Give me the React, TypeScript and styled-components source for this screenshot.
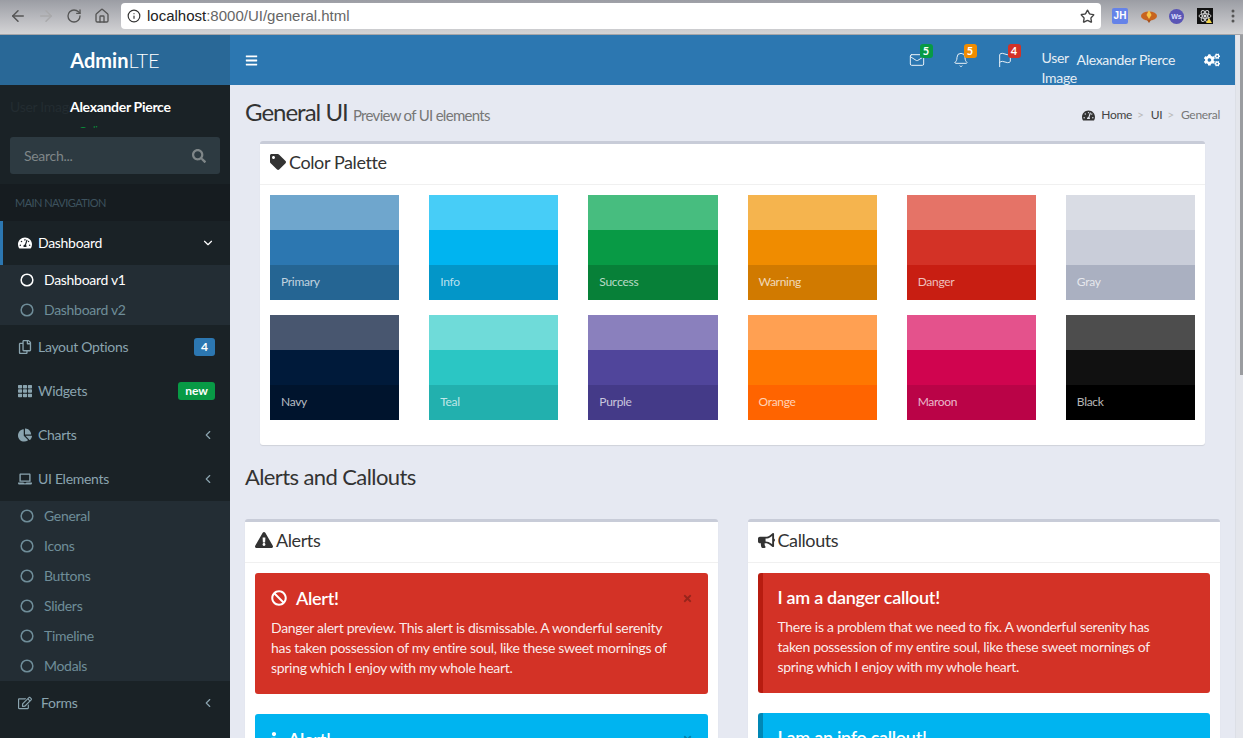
import React from "react";
import styled, { createGlobalStyle } from "styled-components";
import { ArrowLeft, ArrowRight, RotateCw, Home, Star, Info, ChevronDown, ChevronLeft, Circle, Mail, Bell, Flag } from "lucide-react";
import {
  FaTachometerAlt, FaTag, FaExclamationTriangle, FaBullhorn, FaBan, FaCogs, FaTh, FaChartPie,
  FaLaptop, FaRegEdit, FaRegCopy, FaBars, FaSearch, FaInfo, FaTimes,
} from "react-icons/fa";

const font = `"Lato", "Noto Sans", sans-serif`;

const Global = createGlobalStyle`
  html, body { margin: 0; padding: 0; height: 100%; overflow: hidden; }
  body { font-family: ${font}; font-size: 14px; line-height: 20px; letter-spacing: -0.3px; color: #333; background: #e6e9f2; }
  * { box-sizing: border-box; }
`;

const Page = styled.div`
  width: 1243px; height: 738px; display: flex; flex-direction: column; overflow: hidden;
`;
const Chrome = styled.div`
  flex: 0 0 35px; display: flex; align-items: flex-start; padding-top: 3px;
  background: linear-gradient(#9b9da4, #d4d4d6); border-bottom: 1px solid #a5a5a8;
`;
const NavButtons = styled.div`
  flex: 0 0 121px; height: 26px; display: flex; align-items: center; padding-left: 8px; gap: 8px;
`;
const ChromeBtn = styled.span<{ $off?: boolean }>`
  width: 20px; height: 20px; display: flex; align-items: center; justify-content: center;
  color: ${(p) => (p.$off ? "#a9a9ab" : "#555")};
`;
const AddressBar = styled.div`
  flex: 0 0 980px; height: 26px; background: #fff; border-radius: 4px; display: flex; align-items: center;
  padding: 0 6px; color: #333; font-family: "Liberation Sans", sans-serif; font-size: 15px; letter-spacing: 0;
`;
const AddressHost = styled.span` color: #222; margin-left: 6px; `;
const AddressRest = styled.span` color: #666; flex: 1; `;
const Extensions = styled.div`
  flex: 1; height: 26px; display: flex; align-items: center; padding-left: 11px; gap: 12.5px; letter-spacing: 0;
`;
const ExtJH = styled.span`
  width: 16px; height: 16px; border-radius: 2px; background: #6583e8; color: #fff; font: bold 10px/16px "Liberation Sans", sans-serif;
  text-align: center;
`;
const ExtWs = styled.span`
  width: 15px; height: 15px; border-radius: 50%; background: #5a55b5; color: #dfe0ff; font: bold 7px/15px "Liberation Sans", sans-serif;
  text-align: center;
`;
const MenuDots = styled.svg` margin-left: 6px; `;
const Body = styled.div` flex: 1; display: flex; min-height: 0; `;

const Sidebar = styled.aside` flex: 0 0 230px; background: #1a2226; display: flex; flex-direction: column; `;
const Logo = styled.div`
  flex: 0 0 50px; background: #296897; color: #fff; font-size: 20px; line-height: 50px; text-align: center; letter-spacing: 0;
  b { font-weight: 700; } span { font-weight: 300; }
`;
const UserPanel = styled.div`
  height: 43px; overflow: hidden; display: flex; padding: 12px 0 0 10px;
`;
const GhostAlt = styled.span` flex: 0 0 60px; color: #232c31; white-space: nowrap; overflow: hidden; `;
const UserInfo = styled.div` color: #fff; font-weight: 700; font-size: 14px; line-height: 20px; `;
const Online = styled.div` color: #0a8a3a; font-size: 11px; font-weight: 400; margin-top: 4px; `;
const SearchWrap = styled.div` padding: 9px 10px 10px; `;
const SearchBox = styled.div`
  height: 37px; background: #2d3a41; border-radius: 3px; display: flex; align-items: center; justify-content: space-between;
  padding: 0 14px; color: #7f8688; font-size: 14px;
`;
const MenuHeader = styled.div`
  height: 37px; background: #161c20; color: #3d525e; font-size: 11px; letter-spacing: -0.55px; line-height: 37px; padding-left: 15px;
`;
const MenuRow = styled.div<{ $active?: boolean }>`
  height: 44px; display: flex; align-items: center; padding: 0 15px; gap: 6px;
  border-left: 3px solid ${(p) => (p.$active ? "#2c77b1" : "transparent")};
  color: ${(p) => (p.$active ? "#fff" : "#8aa4af")}; font-size: 14px;
`;
const IconSlot = styled.span<{ $w?: number }>`
  flex: 0 0 ${(p) => p.$w ?? 14}px; display: flex; align-items: center; font-size: 14px;
`;
const MenuLabel = styled.span` flex: 1; `;
const Badge = styled.span<{ $bg: string }>`
  background: ${(p) => p.$bg}; color: #fff; font-size: 12px; font-weight: 700; line-height: 18px; height: 18px;
  padding: 0 7px; border-radius: 3px; letter-spacing: 0;
`;
const Submenu = styled.div` background: #232d34; `;
const SubRow = styled.div<{ $active?: boolean }>`
  height: 30px; display: flex; align-items: center; padding-left: 20px; gap: 10px; font-size: 14px;
  color: ${(p) => (p.$active ? "#fff" : "#6f8d99")};
`;

const Main = styled.div` flex: 0 0 1005px; display: flex; flex-direction: column; min-height: 0; `;
const TopBar = styled.header`
  flex: 0 0 50px; height: 50px; min-height: 0; background: #2c77b1; color: #fff; display: flex; align-items: center; padding: 0 15px;
`;
const Spacer = styled.div` flex: 1; `;
const NavIcon = styled.span<{ $mr: number }>`
  position: relative; display: flex; margin-right: ${(p) => p.$mr}px; color: #e8f0f6;
`;
const NavBadge = styled.span<{ $bg: string }>`
  position: absolute; top: -8px; right: -8px; width: 13px; height: 14px; border-radius: 3px; background: ${(p) => p.$bg};
  color: #fff; font-size: 11px; font-weight: 700; line-height: 14px; text-align: center; letter-spacing: 0;
`;
const UserAlt = styled.span`
  width: 34px; line-height: 20px; font-size: 14px; align-self: flex-start; margin-top: 13px; color: #e4edf4; white-space: normal;
`;
const UserName = styled.span` font-size: 14px; color: #e8f0f6; margin: 0 29px 0 1px; white-space: nowrap; `;

const Content = styled.main` flex: 1; overflow: hidden; min-height: 0; `;
const ContentHead = styled.div`
  display: flex; align-items: center; justify-content: space-between; padding: 15px 15px 0; height: 41px;
`;
const PageTitle = styled.h1`
  margin: 0; font-size: 24px; font-weight: 400; line-height: 26px; color: #333; letter-spacing: -1px;
  small { font-size: 15px; color: #777; letter-spacing: -0.7px; }
`;
const Crumbs = styled.div`
  display: flex; align-items: center; margin-top: 4px; font-size: 12px; color: #444;
  svg { margin-right: 6px; color: #333; font-size: 13px; }
  em { font-style: normal; color: #777; }
`;
const CrumbSep = styled.i` color: #bbb; font-style: normal; padding: 0 7px 0 5px; `;
const Section = styled.section` padding: 15px; `;
const Box = styled.div<{ $inset?: boolean }>`
  background: #fff; border-top: 3px solid #c8ccd8; border-radius: 3px; box-shadow: 0 1px 1px rgba(0,0,0,.1);
  margin: ${(p) => (p.$inset ? "0 15px" : "0")};
`;
const BoxHead = styled.div`
  height: 41px; padding: 8px 10px 12px; border-bottom: 1px solid #f0f0f0; display: flex; align-items: center; gap: 3px;
  font-size: 18px; line-height: 20px; color: #333; letter-spacing: -0.4px;
`;
const BoxBody = styled.div` padding: 10px; `;
const Palette = styled.div` display: grid; grid-template-columns: repeat(6, 1fr); column-gap: 30px; row-gap: 15px; padding-bottom: 15px; `;
const Swatch = styled.div` display: flex; flex-direction: column; `;
const Band = styled.div<{ $c: string }>`
  height: 35px; background: ${(p) => p.$c}; color: rgba(255,255,255,.72); font-size: 12px; line-height: 34px; padding-left: 11px;
`;
const SectionTitle = styled.h2`
  margin: 19px 0 29px; font-size: 22px; font-weight: 400; line-height: 26px; color: #333; letter-spacing: -0.6px;
`;
const Columns = styled.div` display: grid; grid-template-columns: 1fr 1fr; column-gap: 30px; `;
const Alert = styled.div<{ $bg: string }>`
  position: relative; background: ${(p) => p.$bg}; color: rgba(255,255,255,.92); border-radius: 3px; padding: 15px 16px 16px; margin-bottom: 20px;
  font-size: 14px; line-height: 20px; white-space: nowrap;
`;
const AlertTitle = styled.div`
  display: flex; align-items: center; gap: 9px; color: #fff; font-size: 18px; font-weight: 600; line-height: 20px; margin-bottom: 10px;
`;
const InfoGlyph = styled(FaInfo)` width: 6px; height: 15px; margin-right: 2px; `;
const Close = styled.span`
  position: absolute; top: 20px; right: 15px; color: rgba(0,0,0,.28); font-size: 11px; display: flex;
`;
const Callout = styled.div<{ $bg: string; $edge: string }>`
  background: ${(p) => p.$bg}; border-left: 5px solid ${(p) => p.$edge}; border-radius: 3px; color: rgba(255,255,255,.92);
  padding: 14px 15px 16px; margin-bottom: 20px; font-size: 14px; line-height: 20px; white-space: nowrap;
`;
const CalloutTitle = styled.div` color: #fff; font-size: 18px; font-weight: 600; line-height: 20px; margin-bottom: 10px; `;

const Scrollbar = styled.div`
  flex: 0 0 8px; background: #e4e6ec; padding-left: 4px; border-left: 1px solid #dcdfe6;
`;
const Thumb = styled.div` height: 340px; background: #9a9ca0; `;

const swatches: [string, string, string, string][] = [
  ["Primary", "#6fa6cd", "#2c77b1", "#256593"],
  ["Info", "#47cdf7", "#00b4f0", "#0396c8"],
  ["Success", "#47bd7f", "#089a45", "#078038"],
  ["Warning", "#f5b44e", "#f08c00", "#d17a00"],
  ["Danger", "#e57367", "#d33226", "#c81e12"],
  ["Gray", "#d9dce4", "#c9cdd9", "#aab0c1"],
  ["Navy", "#48566f", "#001a3a", "#00142d"],
  ["Teal", "#6fdbd9", "#2bc6c4", "#22b0ae"],
  ["Purple", "#8a80bd", "#50459b", "#443a88"],
  ["Orange", "#ffa052", "#ff7701", "#ff6400"],
  ["Maroon", "#e4528c", "#d0044f", "#ba0347"],
  ["Black", "#4d4d4d", "#111111", "#000000"],
];

const Sub = ({ label, active }: { label: string; active?: boolean }) => (
  <SubRow $active={active}><Circle size={14} strokeWidth={2.6} /><span>{label}</span></SubRow>
);

export default function App() {
  return (
    <Page>
      <Global />
      <Chrome>
        <NavButtons>
          <ChromeBtn><ArrowLeft size={18} /></ChromeBtn>
          <ChromeBtn $off><ArrowRight size={18} /></ChromeBtn>
          <ChromeBtn><RotateCw size={16} /></ChromeBtn>
          <ChromeBtn><Home size={16} /></ChromeBtn>
        </NavButtons>
        <AddressBar>
          <Info size={14} />
          <AddressHost>localhost</AddressHost><AddressRest>:8000/UI/general.html</AddressRest>
          <Star size={15} color="#444" strokeWidth={2.2} />
        </AddressBar>
        <Extensions>
          <ExtJH>JH</ExtJH>
          <svg width="16" height="14" viewBox="0 0 16 14"><ellipse cx="8" cy="7" rx="8" ry="4.5" fill="#c8641e" /><path d="M8 1l2.5 5-2.5 4-2.5-4z" fill="#f7c548" /><path d="M6 11h4l-2 3z" fill="#a8501a" /></svg>
          <ExtWs>Ws</ExtWs>
          <svg width="16" height="16" viewBox="0 0 16 16"><rect width="16" height="16" fill="#111" /><circle cx="8" cy="8" r="1.5" fill="#ddd" /><ellipse cx="8" cy="8" rx="6" ry="2.4" fill="none" stroke="#ccc" /><ellipse cx="8" cy="8" rx="6" ry="2.4" fill="none" stroke="#ccc" transform="rotate(60 8 8)" /><ellipse cx="8" cy="8" rx="6" ry="2.4" fill="none" stroke="#ccc" transform="rotate(120 8 8)" /><path d="M12 10l3 5H9z" fill="#f2d64b" /></svg>
          <MenuDots width="4" height="14" viewBox="0 0 4 14"><circle cx="2" cy="2" r="1.5" fill="#555" /><circle cx="2" cy="7" r="1.5" fill="#555" /><circle cx="2" cy="12" r="1.5" fill="#555" /></MenuDots>
        </Extensions>
      </Chrome>
      <Body>
        <Sidebar>
          <Logo><b>Admin</b><span>LTE</span></Logo>
          <UserPanel>
            <GhostAlt>User Image</GhostAlt>
            <UserInfo>Alexander Pierce<Online>● Online</Online></UserInfo>
          </UserPanel>
          <SearchWrap>
            <SearchBox><span>Search...</span><FaSearch size={14} /></SearchBox>
          </SearchWrap>
          <MenuHeader>MAIN NAVIGATION</MenuHeader>
          <MenuRow $active><IconSlot><FaTachometerAlt /></IconSlot><MenuLabel>Dashboard</MenuLabel><ChevronDown size={14} /></MenuRow>
          <Submenu>
            <Sub label="Dashboard v1" active />
            <Sub label="Dashboard v2" />
          </Submenu>
          <MenuRow><IconSlot><FaRegCopy /></IconSlot><MenuLabel>Layout Options</MenuLabel><Badge $bg="#2c77b1">4</Badge></MenuRow>
          <MenuRow><IconSlot><FaTh /></IconSlot><MenuLabel>Widgets</MenuLabel><Badge $bg="#089a45">new</Badge></MenuRow>
          <MenuRow><IconSlot><FaChartPie /></IconSlot><MenuLabel>Charts</MenuLabel><ChevronLeft size={14} /></MenuRow>
          <MenuRow><IconSlot><FaLaptop /></IconSlot><MenuLabel>UI Elements</MenuLabel><ChevronLeft size={14} /></MenuRow>
          <Submenu>
            {["General", "Icons", "Buttons", "Sliders", "Timeline", "Modals"].map((l) => <Sub key={l} label={l} />)}
          </Submenu>
          <MenuRow><IconSlot $w={17}><FaRegEdit /></IconSlot><MenuLabel>Forms</MenuLabel><ChevronLeft size={14} /></MenuRow>
        </Sidebar>
        <Main>
          <TopBar>
            <FaBars size={13} />
            <Spacer />
            <NavIcon $mr={28}><Mail size={16} strokeWidth={1.5} /><NavBadge $bg="#089a45">5</NavBadge></NavIcon>
            <NavIcon $mr={28}><Bell size={16} strokeWidth={1.5} /><NavBadge $bg="#f08c00">5</NavBadge></NavIcon>
            <NavIcon $mr={29}><Flag size={16} strokeWidth={1.5} /><NavBadge $bg="#d33226">4</NavBadge></NavIcon>
            <UserAlt>User Image</UserAlt>
            <UserName>Alexander Pierce</UserName>
            <FaCogs size={16} />
          </TopBar>
          <Content>
            <ContentHead>
              <PageTitle>General UI <small>Preview of UI elements</small></PageTitle>
              <Crumbs><FaTachometerAlt /><span>Home</span><CrumbSep>&gt;</CrumbSep><span>UI</span><CrumbSep>&gt;</CrumbSep><em>General</em></Crumbs>
            </ContentHead>
            <Section>
              <Box $inset>
                <BoxHead><FaTag size={16} />Color Palette</BoxHead>
                <BoxBody>
                  <Palette>
                    {swatches.map(([n, a, b, c]) => (
                      <Swatch key={n}><Band $c={a} /><Band $c={b} /><Band $c={c}>{n}</Band></Swatch>
                    ))}
                  </Palette>
                </BoxBody>
              </Box>
              <SectionTitle>Alerts and Callouts</SectionTitle>
              <Columns>
                <Box>
                  <BoxHead><FaExclamationTriangle size={18} />Alerts</BoxHead>
                  <BoxBody>
                    <Alert $bg="#d33226">
                      <Close><FaTimes /></Close>
                      <AlertTitle><FaBan size={16} />Alert!</AlertTitle>
                      Danger alert preview. This alert is dismissable. A wonderful serenity<br />
                      has taken possession of my entire soul, like these sweet mornings of<br />
                      spring which I enjoy with my whole heart.
                    </Alert>
                    <Alert $bg="#00b4f0">
                      <Close><FaTimes /></Close>
                      <AlertTitle><InfoGlyph />Alert!</AlertTitle>
                      Info alert preview. This alert is dismissable.
                    </Alert>
                  </BoxBody>
                </Box>
                <Box>
                  <BoxHead><FaBullhorn size={17} />Callouts</BoxHead>
                  <BoxBody>
                    <Callout $bg="#d33226" $edge="#b71c10">
                      <CalloutTitle>I am a danger callout!</CalloutTitle>
                      There is a problem that we need to fix. A wonderful serenity has<br />
                      taken possession of my entire soul, like these sweet mornings of<br />
                      spring which I enjoy with my whole heart.
                    </Callout>
                    <Callout $bg="#00b4f0" $edge="#0087b5">
                      <CalloutTitle>I am an info callout!</CalloutTitle>
                      Follow the steps to continue to payment.
                    </Callout>
                  </BoxBody>
                </Box>
              </Columns>
            </Section>
          </Content>
        </Main>
        <Scrollbar><Thumb /></Scrollbar>
      </Body>
    </Page>
  );
}
